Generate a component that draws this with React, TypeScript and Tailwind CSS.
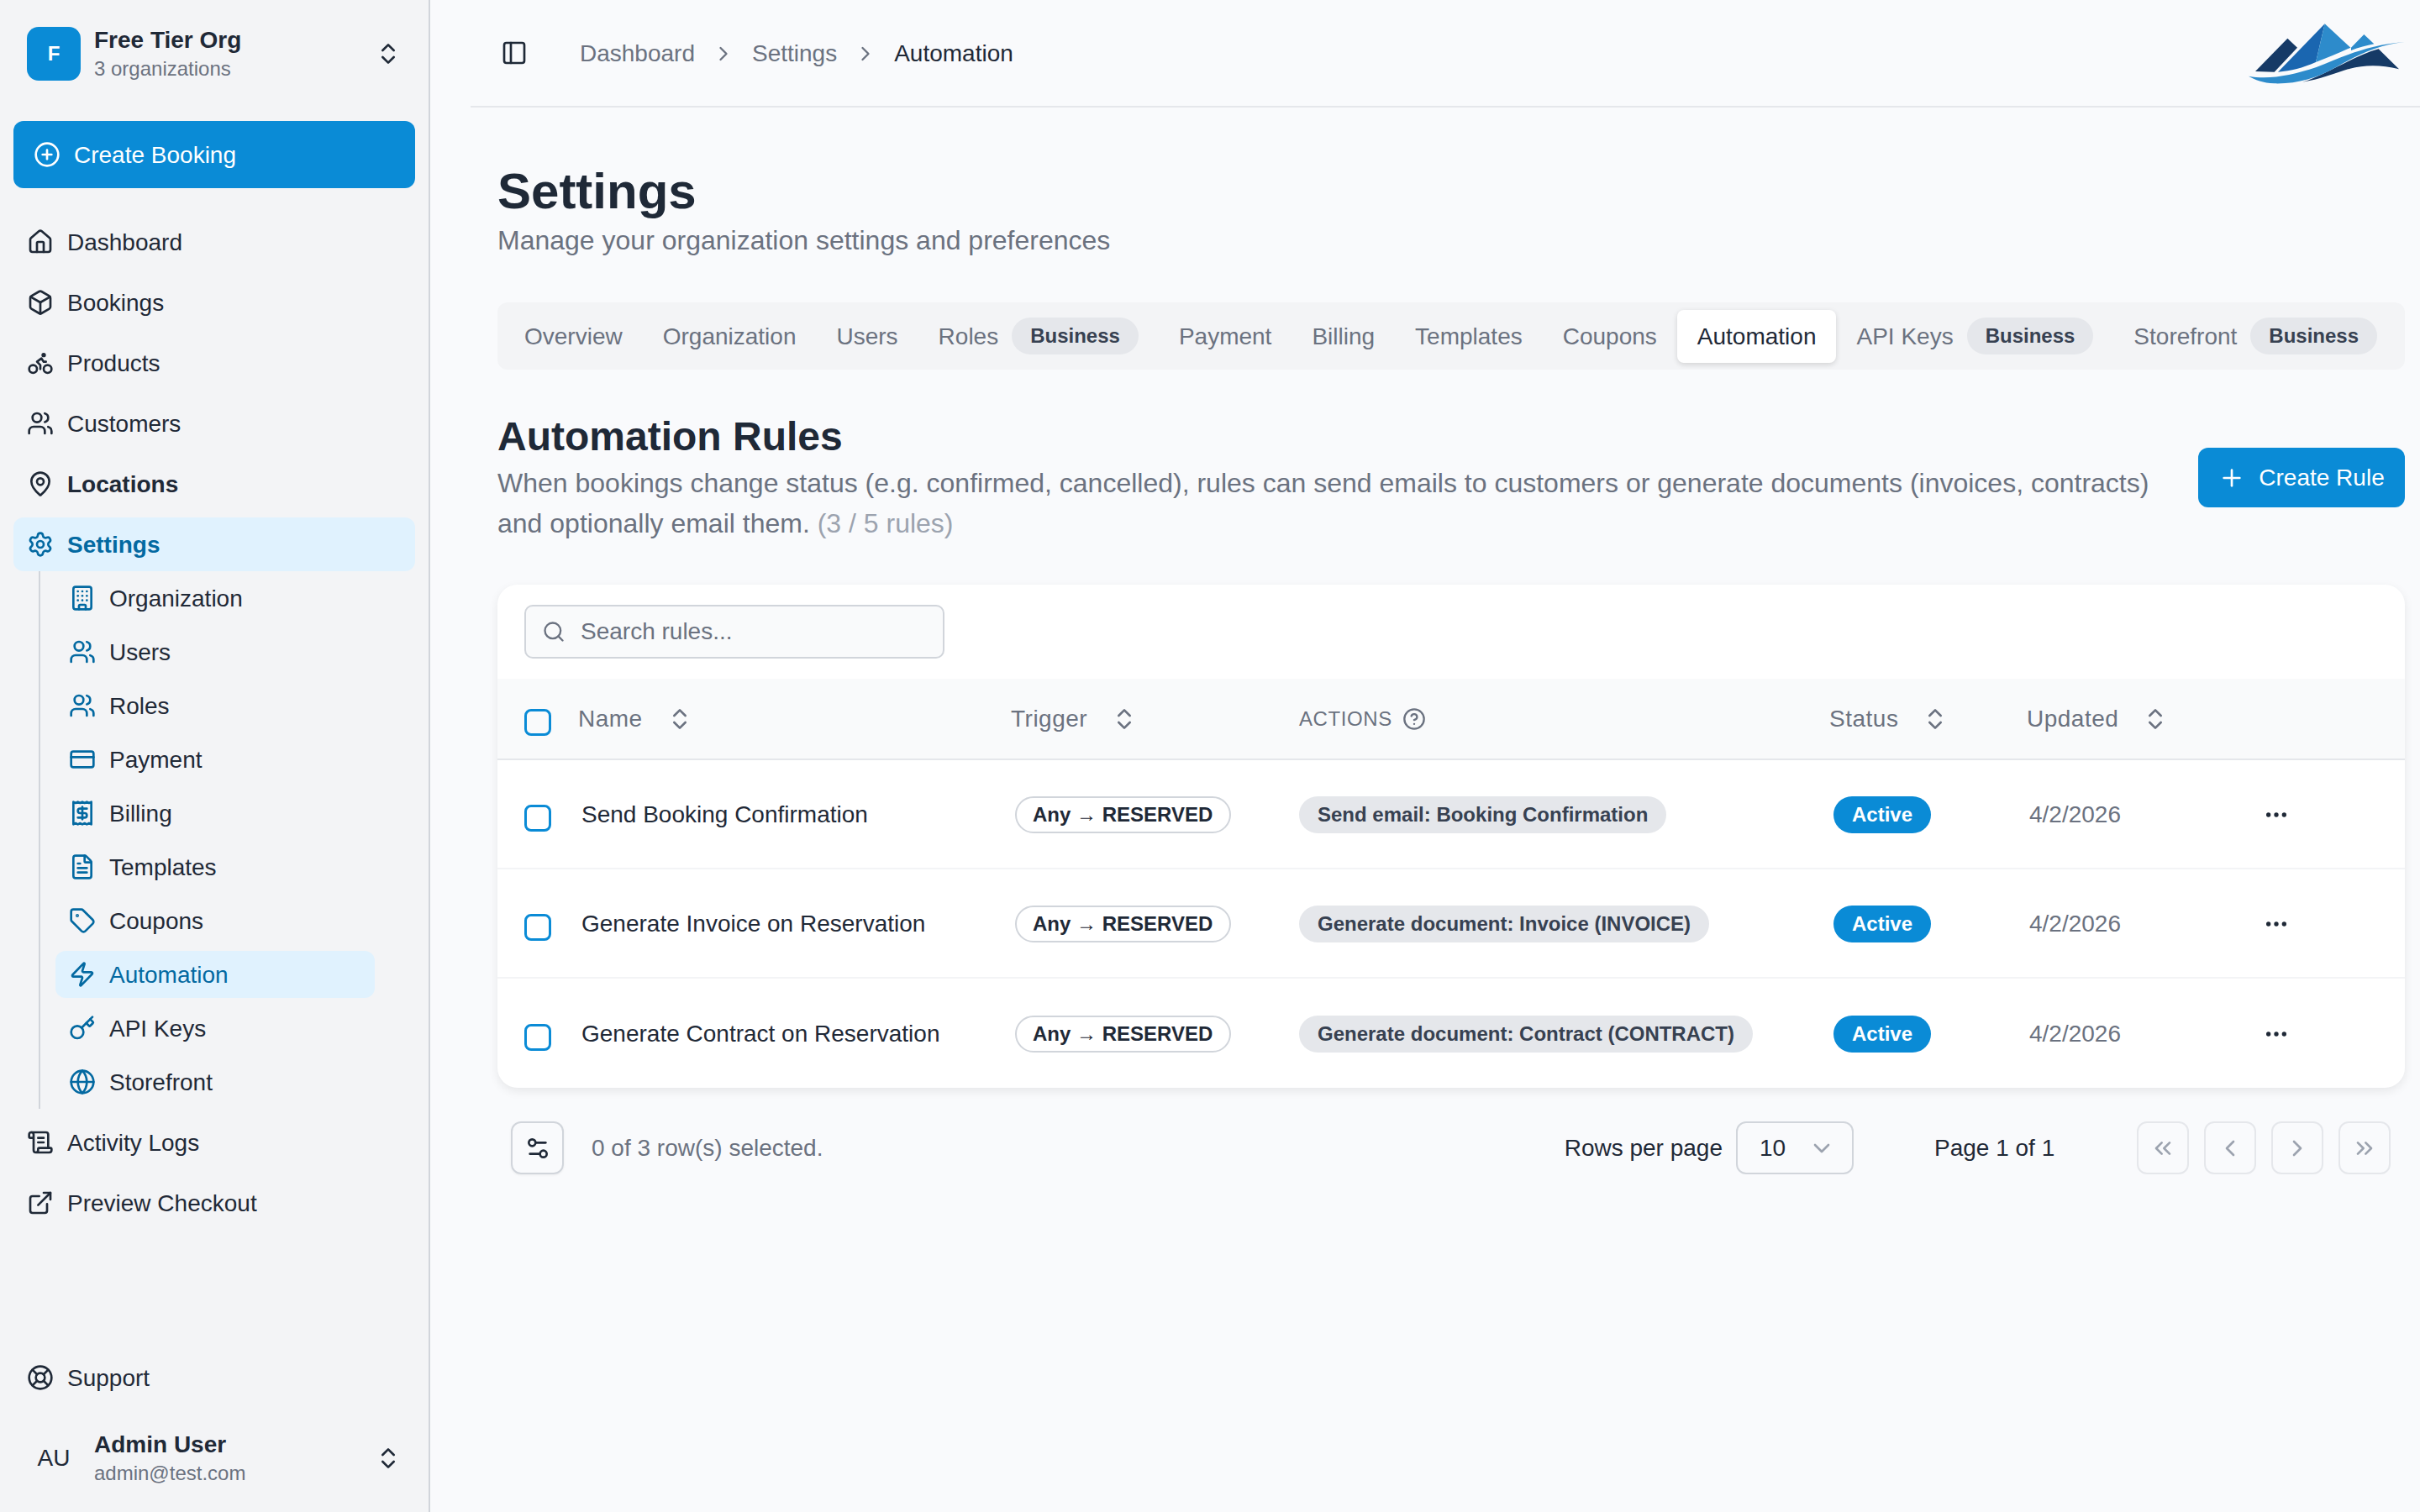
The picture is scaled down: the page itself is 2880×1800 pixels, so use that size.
import React from "react";
import {
  House, Box, Bike, Users, MapPin, Settings, Building, CreditCard, Receipt, FileText, Tag, Zap, Key, Globe,
  ScrollText, ExternalLink, LifeBuoy, ChevronsUpDown, CirclePlus, PanelLeft, ChevronRight, Plus, Search,
  CircleHelp, Ellipsis, Settings2, ChevronDown, ChevronsLeft, ChevronLeft, ChevronsRight,
} from "lucide-react";

type Ic = React.ComponentType<{ size?: number; strokeWidth?: number; className?: string }>;

function NavRow({ icon: I, label, bold, active }: { icon: Ic; label: string; bold?: boolean; active?: boolean }) {
  return (
    <div className={`flex h-[64px] items-center gap-[16px] rounded-[12px] px-[16px] text-[28px] ${active ? "bg-[#e0f2fe] font-bold text-[#0369a1]" : bold ? "font-bold text-[#1f2937]" : "text-[#1f2937]"}`}>
      <I size={32} className="shrink-0" />
      <span className="pt-[2px]">{label}</span>
    </div>
  );
}

function SubRow({ icon: I, label, active }: { icon: Ic; label: string; active?: boolean }) {
  return (
    <div className={`flex h-[56px] items-center gap-[16px] rounded-[12px] px-[16px] text-[28px] ${active ? "bg-[#e0f2fe] text-[#0369a1]" : "text-[#1f2937]"}`}>
      <I size={32} className="shrink-0 text-[#0369a1]" />
      <span className="pt-[1px]">{label}</span>
    </div>
  );
}

function Sidebar() {
  return (
    <aside className="flex h-full w-[512px] shrink-0 flex-col border-r-2 border-[#d1d5db] bg-[#f3f4f6]">
      <div className="flex h-[128px] shrink-0 items-center pl-[32px] pr-[32px]">
        <div className="flex h-[64px] w-[64px] items-center justify-center rounded-[14px] bg-[#0a8bd6] text-[24px] font-bold text-white">F</div>
        <div className="ml-[16px] flex flex-col">
          <span className="text-[28px] font-bold leading-[36px] text-[#1f2937]">Free Tier Org</span>
          <span className="text-[24px] leading-[32px] text-[#6b7280]">3 organizations</span>
        </div>
        <ChevronsUpDown size={32} className="ml-auto text-[#1f2937]" />
      </div>
      <div className="mx-[16px] mt-[16px] flex h-[80px] shrink-0 items-center gap-[16px] rounded-[12px] bg-[#0a8bd6] pl-[24px] text-[28px] text-white">
        <CirclePlus size={32} />
        <span className="pt-[2px]">Create Booking</span>
      </div>
      <nav className="mx-[16px] mt-[32px] flex flex-col gap-[8px]">
        <NavRow icon={House} label="Dashboard" />
        <NavRow icon={Box} label="Bookings" />
        <NavRow icon={Bike} label="Products" />
        <NavRow icon={Users} label="Customers" />
        <NavRow icon={MapPin} label="Locations" bold />
        <div className="flex flex-col">
          <NavRow icon={Settings} label="Settings" active />
          <div className="ml-[30px] flex w-[400px] flex-col gap-[8px] border-l-2 border-[#d1d5db] py-[4px] pl-[18px]">
            <SubRow icon={Building} label="Organization" />
            <SubRow icon={Users} label="Users" />
            <SubRow icon={Users} label="Roles" />
            <SubRow icon={CreditCard} label="Payment" />
            <SubRow icon={Receipt} label="Billing" />
            <SubRow icon={FileText} label="Templates" />
            <SubRow icon={Tag} label="Coupons" />
            <SubRow icon={Zap} label="Automation" active />
            <SubRow icon={Key} label="API Keys" />
            <SubRow icon={Globe} label="Storefront" />
          </div>
        </div>
        <NavRow icon={ScrollText} label="Activity Logs" />
        <NavRow icon={ExternalLink} label="Preview Checkout" />
      </nav>
      <div className="mx-[16px] mt-auto">
        <NavRow icon={LifeBuoy} label="Support" />
      </div>
      <div className="mb-[32px] mt-[32px] flex h-[64px] shrink-0 items-center pl-[32px] pr-[32px]">
        <div className="flex h-[64px] w-[64px] items-center justify-center text-[28px] text-[#1f2937]">AU</div>
        <div className="ml-[16px] flex flex-col">
          <span className="text-[28px] font-bold leading-[36px] text-[#1f2937]">Admin User</span>
          <span className="text-[24px] leading-[32px] text-[#6b7280]">admin@test.com</span>
        </div>
        <ChevronsUpDown size={32} className="ml-auto text-[#1f2937]" />
      </div>
    </aside>
  );
}

function Logo() {
  return (
    <svg width="280" height="126" viewBox="0 0 840 378" className="shrink-0">
      <path d="M252 255 L367 137 L402 170 L320 257 Z" fill="#163a66" />
      <path d="M333 257 L500 85 L468 222 C420 243 380 253 333 257 Z" fill="#1a66b0" />
      <path d="M500 85 L592 170 C550 190 510 205 468 222 Z" fill="#2d8bcb" />
      <path d="M594 170 L640 123 L676 157 C650 162 620 170 594 180 Z" fill="#2d8bcb" />
      <path d="M692 175 L765 247 C700 230 640 232 590 245 C540 260 480 285 420 293 C500 270 600 200 692 175 Z" fill="#163a66" />
      <path d="M228 272 C300 285 380 270 470 240 C560 205 650 160 785 150 C690 160 620 195 540 240 C470 280 400 300 320 298 C280 296 250 285 228 272 Z" fill="#2d8bcb" />
    </svg>
  );
}

function Header() {
  return (
    <header className="ml-[48px] flex h-[128px] shrink-0 items-center justify-between border-b-2 border-[#e5e7eb] pl-[36px]">
      <div className="flex items-center text-[28px]">
        <PanelLeft size={32} className="mr-[62px] text-[#1f2937]" />
        <div className="flex items-center gap-[20px] pt-[2px] text-[#6b7280]">
          <span>Dashboard</span>
          <ChevronRight size={28} />
          <span>Settings</span>
          <ChevronRight size={28} />
          <span className="text-[#1f2937]">Automation</span>
        </div>
      </div>
      <Logo />
    </header>
  );
}

function Tab({ label, badge, active }: { label: string; badge?: boolean; active?: boolean }) {
  return (
    <div className={`flex h-[63px] items-center gap-[16px] rounded-[8px] px-[24px] text-[28px] ${active ? "bg-white text-[#1f2937] shadow-[0_2px_6px_rgba(0,0,0,0.14)]" : "text-[#6b7280]"}`}>
      <span className="pt-[1px]">{label}</span>
      {badge && <span className="flex h-[44px] items-center rounded-full bg-[#e5e7eb] px-[22px] text-[24px] font-bold text-[#374151]">Business</span>}
    </div>
  );
}

function Check() {
  return <div className="mt-[8px] h-[32px] w-[32px] rounded-[8px] border-[3px] border-[#0a8bd6]" />;
}

const GRID = "grid grid-cols-[96px_515px_343px_631px_235px_281px_1fr] items-center";

function Th({ label }: { label: string }) {
  return (
    <div className="flex items-center text-[28px] tracking-[0.5px] text-[#6b7280]">
      <span>{label}</span>
      <ChevronsUpDown size={32} className="ml-[28px]" />
    </div>
  );
}

function Row({ name, action }: { name: string; action: string }) {
  return (
    <div className={`${GRID} h-[130px] border-b-2 border-[#f3f4f6] pt-[2px] text-[28px] last:border-b-0`}>
      <div className="pl-[32px]"><Check /></div>
      <div className="pl-[4px] text-[#1f2937]">{name}</div>
      <div className="pl-[5px]">
        <span className="inline-flex h-[44px] items-center rounded-full border-2 border-[#d1d5db] pl-[19px] pr-[20px] text-[24px] font-bold text-[#1f2937]">
          Any → RESERVED
        </span>
      </div>
      <div>
        <span className="inline-flex h-[44px] items-center rounded-full bg-[#e5e7eb] px-[22px] text-[24px] font-bold text-[#374151]">{action}</span>
      </div>
      <div className="pl-[5px]">
        <span className="inline-flex h-[44px] items-center rounded-full bg-[#0a8bd6] px-[22px] text-[24px] font-bold text-white">Active</span>
      </div>
      <div className="pl-[3px] text-[#6b7280]">4/2/2026</div>
      <div><Ellipsis size={32} className="text-[#1f2937]" /></div>
    </div>
  );
}

function PageBtn({ icon: I }: { icon: Ic }) {
  return (
    <div className="flex h-[63px] w-[62px] items-center justify-center rounded-[12px] border-2 border-[#e5e7eb] text-[#9ca3af]">
      <I size={32} />
    </div>
  );
}

export default function App() {
  return (
    <div className="flex h-[1800px] w-[2880px] overflow-hidden bg-[#f9fafc] font-['Liberation_Sans',Arial,sans-serif]">
      <Sidebar />
      <main className="flex min-w-0 flex-1 flex-col">
        <Header />
        <div className="flex flex-col pl-[80px] pr-[18px]">
          <h1 className="mt-[64px] text-[60px] font-bold leading-[72px] text-[#1f2937]">Settings</h1>
          <p className="pt-[1px] text-[32px] leading-[43px] text-[#6b7280]">Manage your organization settings and preferences</p>

          <div className="mt-[52px] flex h-[80px] items-center rounded-[12px] bg-[#f3f4f6] px-[8px]">
            <Tab label="Overview" />
            <Tab label="Organization" />
            <Tab label="Users" />
            <Tab label="Roles" badge />
            <Tab label="Payment" />
            <Tab label="Billing" />
            <Tab label="Templates" />
            <Tab label="Coupons" />
            <Tab label="Automation" active />
            <Tab label="API Keys" badge />
            <Tab label="Storefront" badge />
          </div>

          <div className="mt-[52px] flex items-center justify-between">
            <div className="max-w-[1990px]">
              <h2 className="text-[48px] font-bold leading-[56px] text-[#1f2937]">Automation Rules</h2>
              <p className="mt-[3px] text-[32px] leading-[48px] text-[#6b7280]">
                When bookings change status (e.g. confirmed, cancelled), rules can send emails to customers or generate documents (invoices, contracts) and optionally email them. <span className="text-[#9ca3af]">(3 / 5 rules)</span>
              </p>
            </div>
            <div className="mb-[2px] flex h-[71px] w-[246px] items-center justify-center gap-[16px] rounded-[12px] bg-[#0a8bd6] text-[28px] text-white">
              <Plus size={32} />
              <span>Create Rule</span>
            </div>
          </div>

          <div className="mt-[49px] overflow-hidden rounded-[24px] bg-white shadow-[0_4px_12px_rgba(0,0,0,0.08)]">
            <div className="flex h-[112px] items-center pl-[32px]">
              <div className="flex h-[64px] w-[500px] items-center gap-[18px] rounded-[10px] border-2 border-[#d1d5db] bg-[#f9fafb] pl-[19px] text-[28px] text-[#6b7280]">
                <Search size={28} />
                <span>Search rules...</span>
              </div>
            </div>
            <div className={`${GRID} h-[97px] border-b-2 border-[#e5e7eb] bg-[#f9fafb]`}>
              <div className="pl-[32px]"><Check /></div>
              <Th label="Name" />
              <Th label="Trigger" />
              <div className="flex items-center gap-[12px] text-[24px] tracking-[0.6px] text-[#6b7280]">
                <span>ACTIONS</span>
                <CircleHelp size={28} />
              </div>
              <Th label="Status" />
              <Th label="Updated" />
              <div />
            </div>
            <Row name="Send Booking Confirmation" action="Send email: Booking Confirmation" />
            <Row name="Generate Invoice on Reservation" action="Generate document: Invoice (INVOICE)" />
            <Row name="Generate Contract on Reservation" action="Generate document: Contract (CONTRACT)" />
          </div>

          <div className="mt-[40px] flex items-center justify-between pl-[16px] pr-[17px]">
            <div className="flex items-center gap-[33px] text-[28px] text-[#6b7280]">
              <div className="flex h-[63px] w-[63px] items-center justify-center rounded-[12px] border-2 border-[#d1d5db] text-[#1f2937] shadow-[0_1px_3px_rgba(0,0,0,0.06)]">
                <Settings2 size={32} />
              </div>
              <span>0 of 3 row(s) selected.</span>
            </div>
            <div className="flex items-center text-[28px] text-[#1f2937]">
              <span>Rows per page</span>
              <div className="ml-[16px] flex h-[63px] w-[140px] items-center justify-between rounded-[12px] border-2 border-[#d1d5db] pl-[26px] pr-[20px]">
                <span>10</span>
                <ChevronDown size={32} className="text-[#9ca3af]" />
              </div>
              <span className="ml-[96px] w-[241px]">Page 1 of 1</span>
              <div className="flex items-center gap-[18px]">
                <PageBtn icon={ChevronsLeft} />
                <PageBtn icon={ChevronLeft} />
                <PageBtn icon={ChevronRight} />
                <PageBtn icon={ChevronsRight} />
              </div>
            </div>
          </div>
        </div>
      </main>
    </div>
  );
}
